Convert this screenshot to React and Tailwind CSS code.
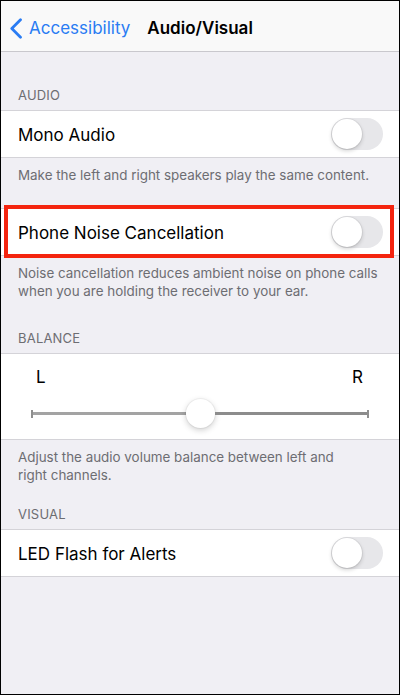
const font = { fontFamily: 'Inter, "Liberation Sans", sans-serif' };

function BackChevron() {
  return (
    <svg width="14" height="21" viewBox="0 0 14 21" fill="none">
      <polyline points="11.5,1.8 2.8,10.5 11.5,19.2" stroke="currentColor" strokeWidth="2.8" strokeLinecap="round" strokeLinejoin="round" />
    </svg>
  );
}

function Toggle() {
  return (
    <div className="relative w-[52px] h-[32px] rounded-full bg-[#e7e7ea]">
      <div className="absolute left-[1px] top-[1px] w-[30px] h-[30px] rounded-full bg-white shadow-[0_2px_4px_rgba(0,0,0,0.18),0_0_0_1px_rgba(0,0,0,0.05)]" />
    </div>
  );
}

function SectionLabel({ children, className = '' }) {
  return (
    <div className={`px-[17px] pb-[7px] text-[13px] leading-[16px] tracking-[0.2px] text-[#6d6d72] ${className}`}>
      {children}
    </div>
  );
}

function Footer({ children, className = '' }) {
  return (
    <div className={`px-[17px] pt-[8px] text-[13.4px] leading-[18px] text-[#6d6d72] ${className}`}>
      {children}
    </div>
  );
}

function SwitchRow({ label, highlight }) {
  return (
    <div className="relative bg-white border-y border-[#d4d3d8] h-[48px] flex items-center justify-between pl-[17px] pr-[16px]">
      <span className="pt-[3px] text-[17px] text-black">{label}</span>
      <Toggle />
      {highlight && (
        <div className="absolute left-[3px] right-[5px] -top-[4px] -bottom-[3px] border-[4px] border-[#f4240e]" />
      )}
    </div>
  );
}

export default function App() {
  return (
    <div style={font} className="w-[400px] h-[695px] bg-[#f0eff4] border border-black overflow-hidden flex flex-col">
      <div className="h-[51px] bg-[#f9f9f9] border-b border-[#c9c8cd] flex items-center pt-[5px] shrink-0">
        <div className="flex items-center text-[#2a7cf3] pl-[8px]">
          <BackChevron />
          <span className="ml-[6px] text-[17px]">Accessibility</span>
        </div>
        <span className="ml-[17px] text-[17px] font-semibold text-black">Audio/Visual</span>
      </div>

      <SectionLabel className="pt-[35px]">AUDIO</SectionLabel>
      <SwitchRow label="Mono Audio" />
      <Footer className="pb-[24px]">Make the left and right speakers play the same content.</Footer>
      <SwitchRow label="Phone Noise Cancellation" highlight />
      <Footer>
        Noise cancellation reduces ambient noise on phone calls when you are holding the receiver to your ear.
      </Footer>

      <SectionLabel className="pt-[30px]">BALANCE</SectionLabel>
      <div className="bg-white border-y border-[#d4d3d8] h-[87px] px-[30px] flex flex-col">
        <div className="flex justify-between text-[17px] text-black pt-[11px] pl-[5px] pr-[6px]">
          <span>L</span>
          <span>R</span>
        </div>
        <div className="relative mt-[8px] h-[30px] flex items-center">
          <div className="w-[2px] h-[8px] bg-[#8f8f8f]" />
          <div className="flex-1 h-[3px] bg-[#a3a3a3]" />
          <div className="w-[29px] h-[29px] rounded-full bg-white shadow-[0_2px_6px_rgba(0,0,0,0.2),0_0_0_1px_rgba(0,0,0,0.04)]" />
          <div className="flex-1 h-[3px] bg-[#8c8c8c]" />
          <div className="w-[2px] h-[8px] bg-[#8f8f8f]" />
        </div>
      </div>
      <Footer>
        Adjust the audio volume balance between left and
        <br />
        right channels.
      </Footer>

      <SectionLabel className="pt-[22px]">VISUAL</SectionLabel>
      <SwitchRow label="LED Flash for Alerts" />
    </div>
  );
}
